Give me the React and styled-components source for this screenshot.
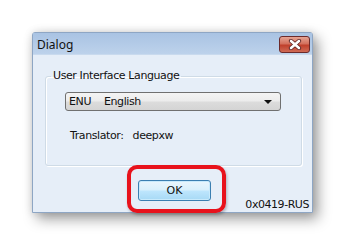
import React from "react";
import styled, { createGlobalStyle } from "styled-components";

const Global = createGlobalStyle`
  html, body { margin: 0; padding: 0; background: #ffffff; }
  body { width: 345px; height: 246px; overflow: hidden; }
`;

const Page = styled.div`
  padding: 32px 0 0 32px;
`;

const Window = styled.div`
  width: 281px;
  height: 181px;
  box-sizing: border-box;
  border: 1px solid #8ea6c4;
  border-radius: 3px 3px 0 0;
  background: #e6eef8;
  box-shadow: 5px 6px 14px rgba(0, 0, 0, 0.38), 0 0 8px rgba(0, 0, 0, 0.12);
  display: flex;
  flex-direction: column;
  font-family: Tahoma, "DejaVu Sans", sans-serif;
`;

const TitleBar = styled.div`
  height: 21px;
  flex: none;
  display: flex;
  align-items: center;
  justify-content: space-between;
  padding: 0 2px 0 4px;
  background: linear-gradient(#a9c3e3, #bdd2eb);
  border-bottom: 1px solid #c9daee;
`;

const Title = styled.span`
  font-family: "Noto Sans", "Open Sans", sans-serif;
  font-size: 12px;
  color: #111;
  margin-top: 1px;
`;

const CloseButton = styled.div`
  width: 31px;
  height: 17px;
  box-sizing: border-box;
  border: 1px solid #6c2a2a;
  border-radius: 3px;
  background: linear-gradient(#e6a493 0%, #d3705d 45%, #c0402c 55%, #cf6a55 100%);
  display: flex;
  align-items: center;
  justify-content: center;
  margin-top: 1px;
`;

const Body = styled.div`
  flex: 1;
  display: flex;
  flex-direction: column;
  padding: 14px 10px 0 12px;
`;

const Group = styled.fieldset`
  margin: 0;
  padding: 0;
  height: 97px;
  box-sizing: border-box;
  border: 1px solid #cfdbe6;
  border-radius: 3px;
  box-shadow: inset 1px 1px 0 #ffffff, 1px 1px 0 #ffffff;
`;

const Legend = styled.legend`
  font-family: "DejaVu Sans", sans-serif;
  font-size: 11px;
  letter-spacing: -0.4px;
  color: #111;
  padding: 0 2px;
  margin-left: 5px;
  line-height: 14px;
`;

const GroupContent = styled.div`
  padding: 9px 0 0 19px;
`;

const Combo = styled.div`
  width: 216px;
  height: 19px;
  box-sizing: border-box;
  border: 1px solid #707070;
  border-radius: 3px;
  background: linear-gradient(#f4f4f4 0%, #ececec 48%, #dcdcdc 52%, #d4d4d4 100%);
  display: flex;
  align-items: center;
  padding: 0 8px 0 3px;
  font-family: "DejaVu Sans", sans-serif;
  font-size: 11px;
  letter-spacing: -0.4px;
  color: #111;
`;

const Code = styled.span`
  width: 35px;
`;

const Lang = styled.span`
  flex: 1;
`;

const Arrow = styled.span`
  width: 0;
  height: 0;
  border-left: 4px solid transparent;
  border-right: 4px solid transparent;
  border-top: 4px solid #111;
`;

const Translator = styled.div`
  margin: 18px 0 0 5px;
  font-family: "DejaVu Sans", sans-serif;
  font-size: 11px;
  letter-spacing: -0.4px;
  color: #111;
  display: flex;
  gap: 9px;
`;

const Footer = styled.div`
  display: grid;
  grid-template-columns: 94px 99px 1fr;
  margin: -1px -10px 0 -12px;
  align-items: end;
`;

const Highlight = styled.div`
  grid-column: 2;
  height: 48px;
  box-sizing: border-box;
  border: 4px solid #e8121c;
  border-radius: 10px;
  box-shadow: 1px 2px 3px rgba(0, 0, 0, 0.25);
  padding: 11px 0 0 7px;
`;

const Button = styled.div`
  width: 73px;
  height: 21px;
  box-sizing: border-box;
  border: 1px solid #3c7fb1;
  border-radius: 3px;
  background: linear-gradient(#eaf6fd 0%, #d9f0fc 48%, #bee6fd 52%, #a7d9f5 100%);
  box-shadow: inset 0 0 0 1px #c8eafc;
  display: flex;
  align-items: center;
  justify-content: center;
  font-family: "DejaVu Sans", sans-serif;
  font-size: 11px;
  color: #111;
`;

const Locale = styled.div`
  grid-column: 3;
  justify-self: end;
  padding: 0 3px 2px 0;
  font-family: "DejaVu Sans", sans-serif;
  font-size: 11px;
  letter-spacing: -0.45px;
  color: #111;
`;

export default function App() {
  return (
    <>
      <Global />
      <Page>
        <Window>
          <TitleBar>
            <Title>Dialog</Title>
            <CloseButton>
              <svg width="14" height="11" viewBox="0 0 14 11">
                <path
                  d="M3 2 L11 9 M11 2 L3 9"
                  stroke="#5a2020"
                  strokeWidth="4.2"
                  strokeLinecap="round"
                />
                <path
                  d="M3 2 L11 9 M11 2 L3 9"
                  stroke="#ffffff"
                  strokeWidth="2.6"
                  strokeLinecap="round"
                />
              </svg>
            </CloseButton>
          </TitleBar>
          <Body>
            <Group>
              <Legend>User Interface Language</Legend>
              <GroupContent>
                <Combo>
                  <Code>ENU</Code>
                  <Lang>English</Lang>
                  <Arrow />
                </Combo>
                <Translator>
                  <span>Translator:</span>
                  <span>deepxw</span>
                </Translator>
              </GroupContent>
            </Group>
            <Footer>
              <Highlight>
                <Button>OK</Button>
              </Highlight>
              <Locale>0x0419-RUS</Locale>
            </Footer>
          </Body>
        </Window>
      </Page>
    </>
  );
}
